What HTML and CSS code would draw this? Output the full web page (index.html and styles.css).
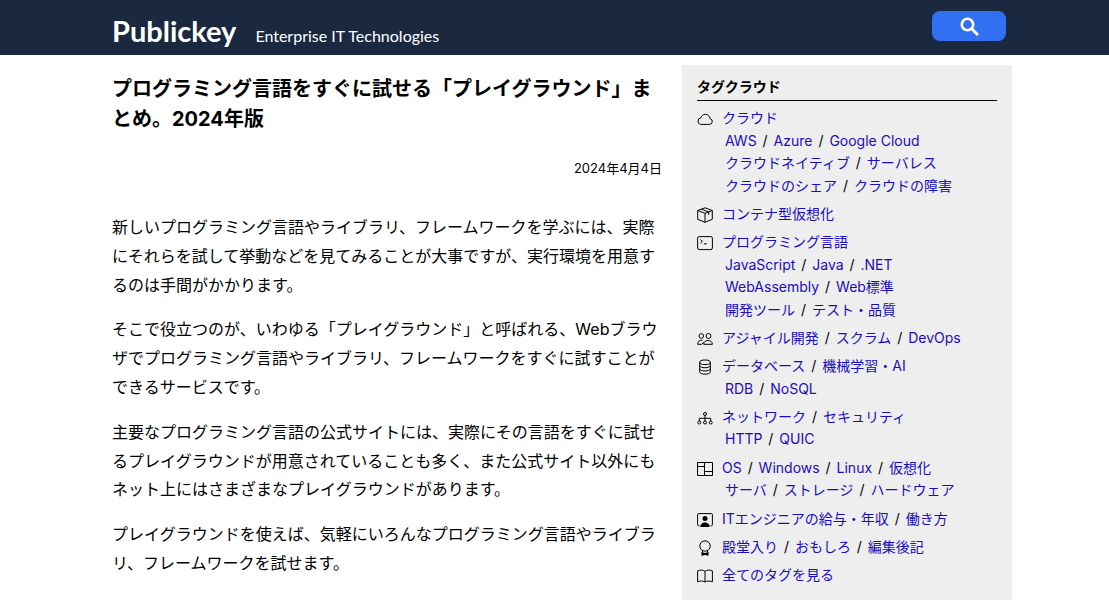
FILE: index.html
```html
<!DOCTYPE html>
<html lang="ja">
<head>
<meta charset="utf-8">
<meta name="viewport" content="width=device-width, initial-scale=1">
<title>プログラミング言語をすぐに試せる「プレイグラウンド」まとめ。2024年版 - Publickey</title>
<link rel="stylesheet" href="styles.css">
</head>
<body>
<header class="site-header">
  <div class="wrap header-row">
    <a class="brand" href="#">
      <span class="logo">Publickey</span>
      <span class="tagline">Enterprise IT Technologies</span>
    </a>
    <button class="search" type="button" aria-label="検索">
      <svg width="20" height="20" viewBox="0 0 20 20" fill="none" stroke="#fff"><circle cx="8.500" cy="8.500" r="5.700" stroke-width="2.600"/><path d="M12.500 12.500 19 19" stroke-width="3"/></svg>
    </button>
  </div>
</header>
<div class="page">
<div class="wrap columns">
  <main class="article">
    <h1>プログラミング言語をすぐに試せる「プレイグラウンド」まとめ。2024年版</h1>
    <p class="date">2024年4月4日</p>
    <p>新しいプログラミング言語やライブラリ、フレームワークを学ぶには、実際にそれらを試して挙動などを見てみることが大事ですが、実行環境を用意するのは手間がかかります。</p>
    <p>そこで役立つのが、いわゆる「プレイグラウンド」と呼ばれる、Webブラウザでプログラミング言語やライブラリ、フレームワークをすぐに試すことができるサービスです。</p>
    <p>主要なプログラミング言語の公式サイトには、実際にその言語をすぐに試せるプレイグラウンドが用意されていることも多く、また公式サイト以外にもネット上にはさまざまなプレイグラウンドがあります。</p>
    <p>プレイグラウンドを使えば、気軽にいろんなプログラミング言語やライブラリ、フレームワークを試せます。</p>
  </main>
  <aside class="tags">
    <h2>タグクラウド</h2>
    <ul class="tag-list">
      <li>
        <svg class="icon" viewBox="0 0 16 16"><path d="M3.600 13.400h9a2.900 2.900 0 0 0 .5-5.700C12.700 5 10.700 3.300 8.300 3.300 6 3.300 4.400 4.700 3.800 6.900A3.300 3.300 0 0 0 3.600 13.400z"/></svg>
        <div><a href="#">クラウド</a>
          <div class="sub"><a href="#">AWS</a> <span class="sep">/</span> <a href="#">Azure</a> <span class="sep">/</span> <a href="#">Google Cloud</a><br><a href="#">クラウドネイティブ</a> <span class="sep">/</span> <a href="#">サーバレス</a><br><a href="#">クラウドのシェア</a> <span class="sep">/</span> <a href="#">クラウドの障害</a></div>
        </div>
      </li>
      <li>
        <svg class="icon" viewBox="0 0 16 16"><path d="M8 .8 15.300 3.500v8.800L8 15.300.7 12.300V3.500zM.7 3.500 8 6.400l7.300-2.900M8 6.400v8.900M4.400 2.200l7.300 2.800v2.800"/></svg>
        <div><a href="#">コンテナ型仮想化</a></div>
      </li>
      <li>
        <svg class="icon" viewBox="0 0 16 16"><rect x=".6" y="1.600" width="14.800" height="13" rx="1.600"/><path d="m3.400 4.600 2 1.800-2 1.800M6.800 8.800h3"/></svg>
        <div><a href="#">プログラミング言語</a>
          <div class="sub"><a href="#">JavaScript</a> <span class="sep">/</span> <a href="#">Java</a> <span class="sep">/</span> <a href="#">.NET</a><br><a href="#">WebAssembly</a> <span class="sep">/</span> <a href="#">Web標準</a><br><a href="#">開発ツール</a> <span class="sep">/</span> <a href="#">テスト・品質</a></div>
        </div>
      </li>
      <li>
        <svg class="icon" viewBox="0 0 16 16"><circle cx="4.300" cy="5" r="2.300"/><circle cx="11.500" cy="5" r="2.500"/><path d="M5.600 9.100C2.500 8.700.7 10.500.7 13.300h3.800M6.700 13.300c0-5.200 8.700-5.200 8.700 0zM4.600 13.300l2.100-2"/></svg>
        <div><a href="#">アジャイル開発</a> <span class="sep">/</span> <a href="#">スクラム</a> <span class="sep">/</span> <a href="#">DevOps</a></div>
      </li>
      <li>
        <svg class="icon" viewBox="0 0 16 16"><ellipse cx="8" cy="3.300" rx="5.300" ry="2.300"/><path d="M2.700 3.300v9.600c0 3 10.600 3 10.600 0V3.300M2.700 6.500c0 3 10.600 3 10.600 0M2.700 9.700c0 3 10.600 3 10.600 0"/></svg>
        <div><a href="#">データベース</a> <span class="sep">/</span> <a href="#">機械学習・AI</a>
          <div class="sub"><a href="#">RDB</a> <span class="sep">/</span> <a href="#">NoSQL</a></div>
        </div>
      </li>
      <li>
        <svg class="icon" viewBox="0 0 16 16"><circle cx="8" cy="4" r="1.500"/><circle cx="2.300" cy="12.500" r="1.500"/><circle cx="8" cy="12.500" r="1.500"/><circle cx="13.700" cy="12.500" r="1.500"/><path d="M8 5.500V11M2.300 11V8.300h11.400V11"/></svg>
        <div><a href="#">ネットワーク</a> <span class="sep">/</span> <a href="#">セキュリティ</a>
          <div class="sub"><a href="#">HTTP</a> <span class="sep">/</span> <a href="#">QUIC</a></div>
        </div>
      </li>
      <li>
        <svg class="icon" viewBox="0 0 16 16"><path d="M.5 1.500h15v13H.5zM7.500 1.500v13M.5 5.500h7M7.500 10.500h8"/></svg>
        <div><a href="#">OS</a> <span class="sep">/</span> <a href="#">Windows</a> <span class="sep">/</span> <a href="#">Linux</a> <span class="sep">/</span> <a href="#">仮想化</a>
          <div class="sub"><a href="#">サーバ</a> <span class="sep">/</span> <a href="#">ストレージ</a> <span class="sep">/</span> <a href="#">ハードウェア</a></div>
        </div>
      </li>
      <li>
        <svg class="icon" viewBox="0 0 16 16"><path d="M2.500 13.800H1.600a1 1 0 0 1-1-1V2.600a1 1 0 0 1 1-1h12.800a1 1 0 0 1 1 1v10.200a1 1 0 0 1-1 1h-.9"/><circle class="solid" cx="8" cy="6.500" r="2.500"/><path class="solid" d="M3.300 15c0-6 9.400-6 9.400 0z"/></svg>
        <div><a href="#">ITエンジニアの給与・年収</a> <span class="sep">/</span> <a href="#">働き方</a></div>
      </li>
      <li>
        <svg class="icon" viewBox="0 0 16 16"><circle cx="8" cy="6" r="5.200"/><path d="M5.800 10.800 5 12.500M10.200 10.800l.8 1.700"/><path class="solid" d="M4.500 12 8 13l3.500-1v3.800L8 14.900l-3.500.9z"/></svg>
        <div><a href="#">殿堂入り</a> <span class="sep">/</span> <a href="#">おもしろ</a> <span class="sep">/</span> <a href="#">編集後記</a></div>
      </li>
      <li>
        <svg class="icon" viewBox="0 0 16 16"><path d="M8 3.300C6 1.800 3 1.800.6 2.800v11C3 12.800 6 12.800 8 14c2-1.200 5-1.200 7.400-.2v-11C13 1.800 10 1.800 8 3.300zV14"/></svg>
        <div><a href="#">全てのタグを見る</a></div>
      </li>
    </ul>
  </aside>
</div>
</div>
</body>
</html>
```
FILE: styles.css
```css
* { box-sizing: border-box; }
body {
  margin: 0;
  padding: 0;
  background: #fff;
  color: #000;
  font-family: Inter, "Noto Sans CJK JP", sans-serif;
  font-size: 16px;
  line-height: 1.8;
}
a { color: #1a0dbd; text-decoration: none; }
.site-header { background: #1a2940; padding-left: 15px; }
.page { padding-left: 15px; }
.wrap { max-width: 900px; margin: 0 auto; }
.header-row {
  display: flex;
  justify-content: space-between;
  align-items: flex-start;
  min-height: 55px;
  padding: 11px 6px 0 0;
}
.brand {
  display: flex;
  align-items: baseline;
  gap: 19px;
  padding-top: 2px;
  color: #fff;
  line-height: 36px;
}
.logo { font-family: Lato, sans-serif; font-size: 29px; font-weight: 700; }
.tagline { font-family: Lato, sans-serif; font-size: 16px; }
.search {
  display: flex;
  align-items: center;
  justify-content: center;
  width: 74px;
  height: 30px;
  padding: 0;
  border: 0;
  border-radius: 8px;
  background: #316ff3;
  cursor: pointer;
}
.columns {
  display: grid;
  grid-template-columns: minmax(0, 1fr) 330px;
  gap: 20px;
}
.article { padding-top: 19px; }
.article h1 { margin: 0; font-size: 20px; line-height: 30px; font-weight: 700; }
.article p { margin: 0 0 16px; }
.article .date { margin: 23px 0 34px; text-align: right; font-size: 13px; line-height: 22px; }
.tags { margin-top: 10px; padding: 11px 15px 16px; background: #eee; font-size: 14px; line-height: 1.6; }
.tags h2 { margin: 0; padding-bottom: 2px; border-bottom: 1px solid #000; font-size: 14px; }
.tag-list { list-style: none; margin: 6px 0 0; padding: 0; display: grid; gap: 6px; }
.tag-list li { display: flex; gap: 9px; }
.sub { padding-left: 3px; }
.sep { padding: 0 2px; }
.icon {
  flex: none;
  width: 16px;
  height: 16px;
  margin-top: 4px;
  fill: none;
  stroke: #000;
  stroke-width: 1;
  stroke-linejoin: round;
}
.icon .solid { fill: #000; stroke: none; }
```
